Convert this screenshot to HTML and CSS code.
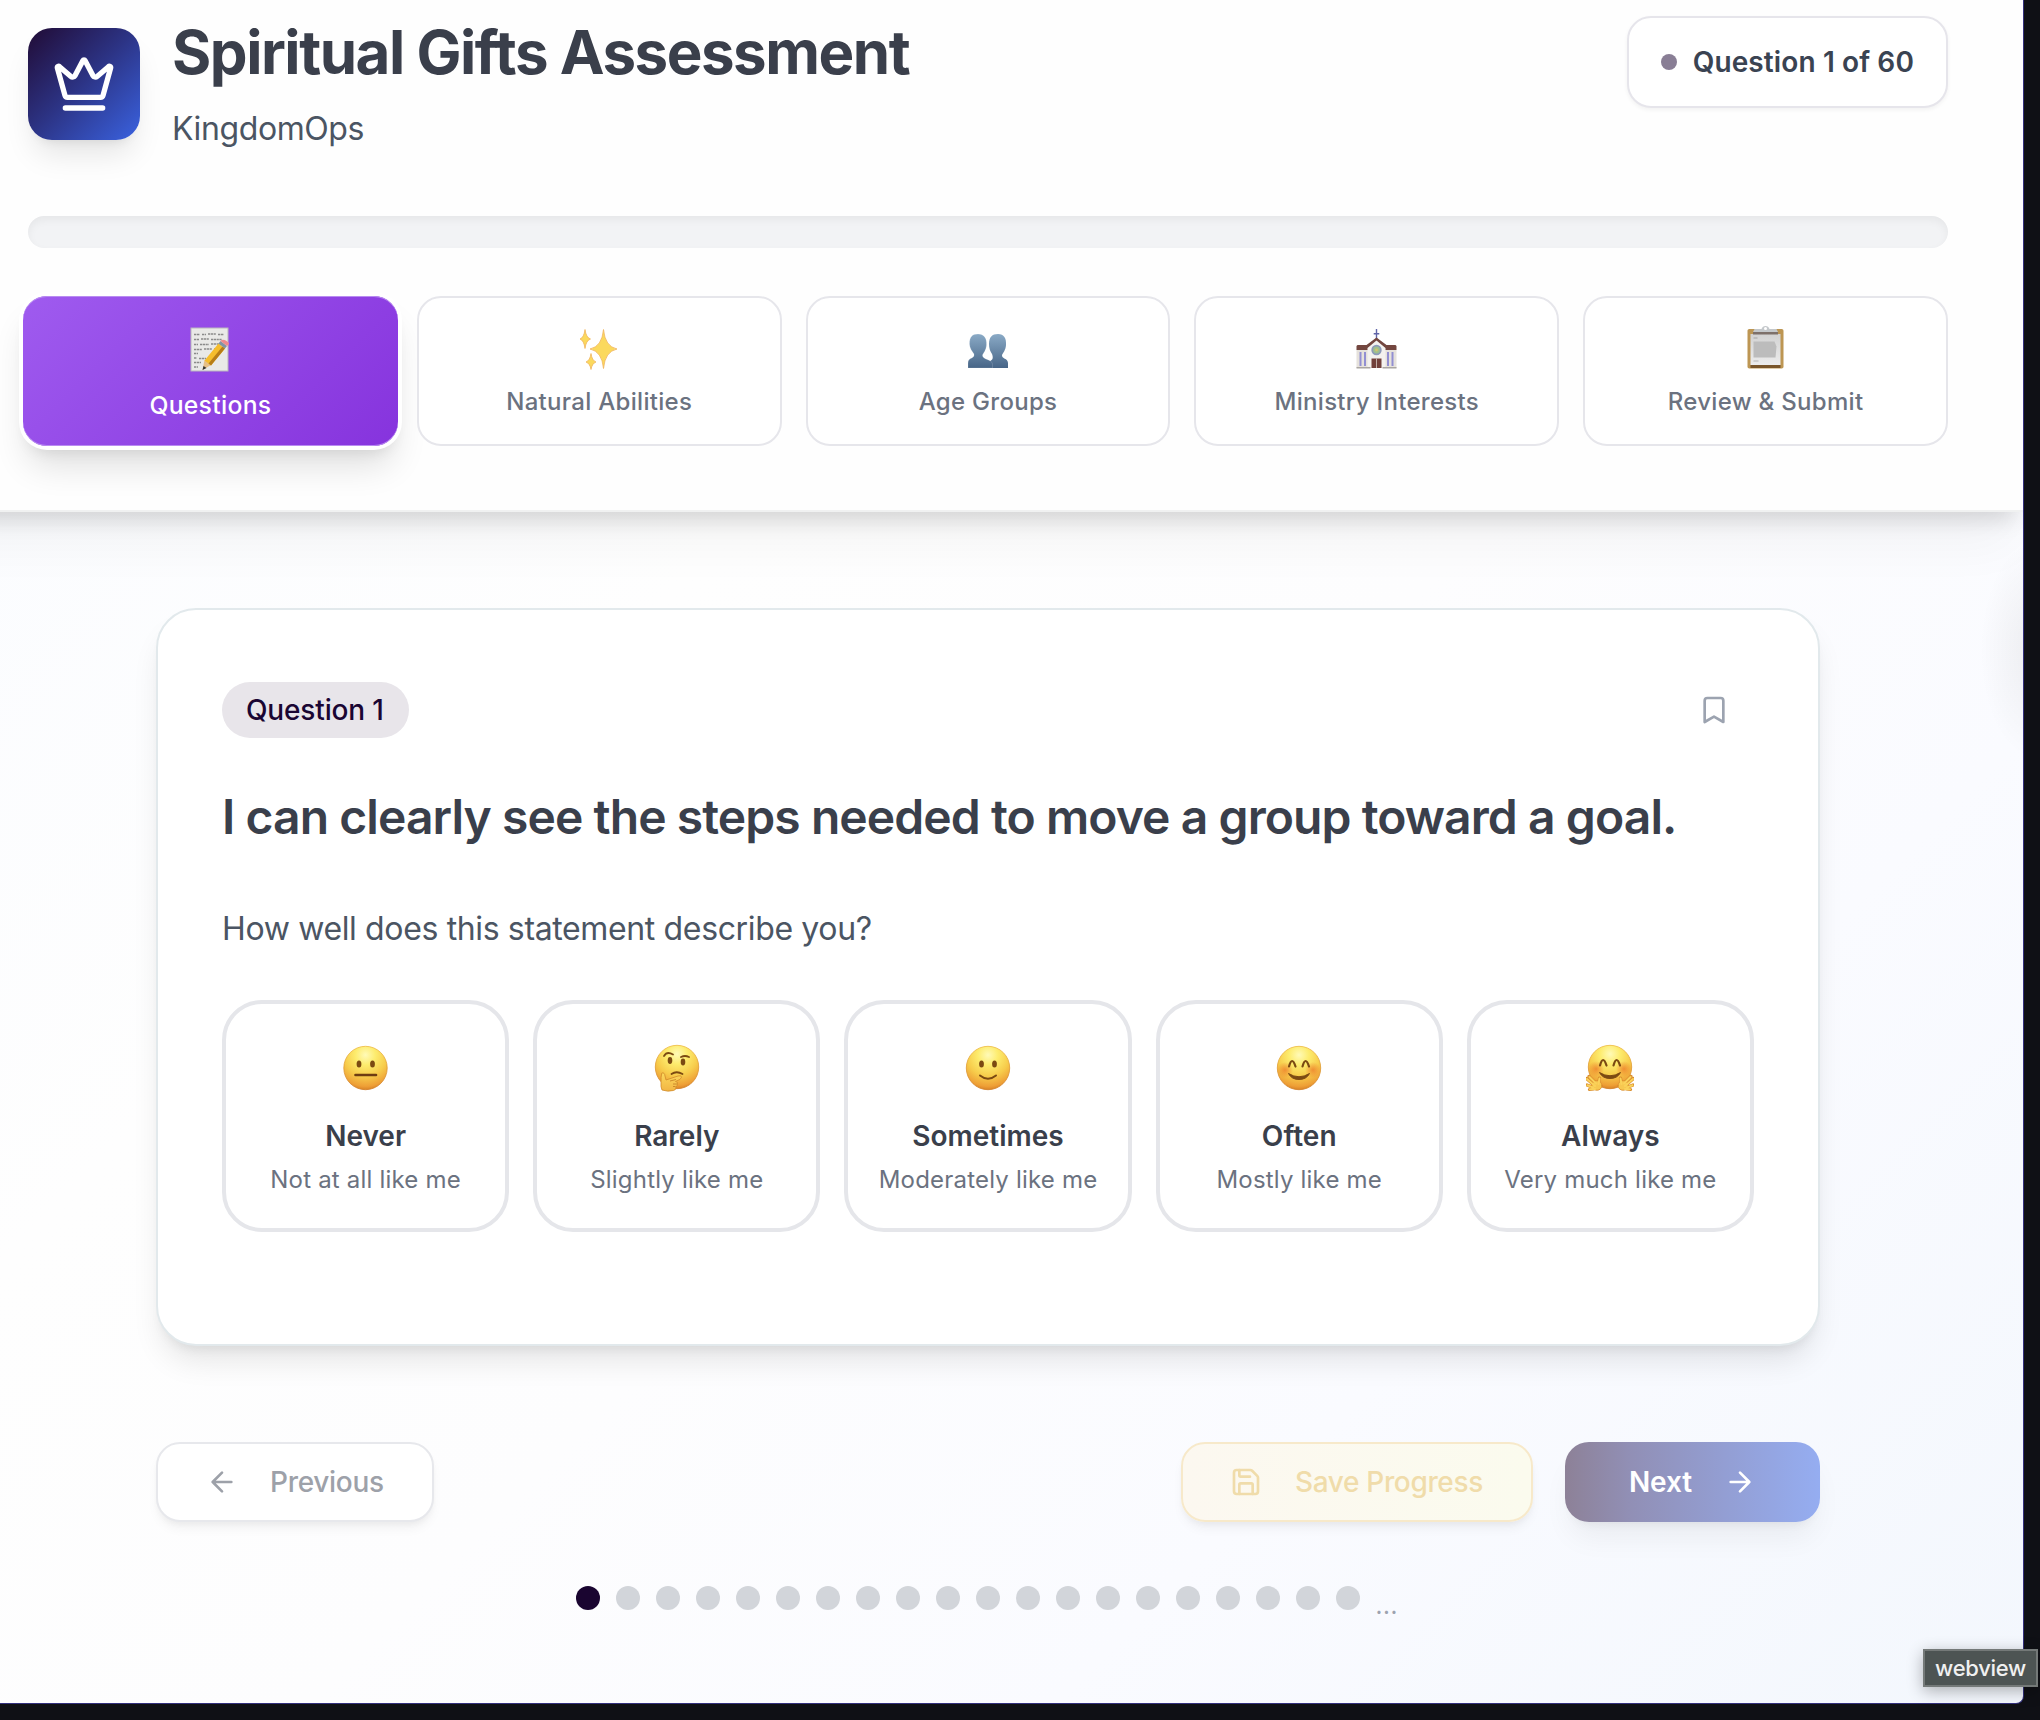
FILE: index.html
```html
<!DOCTYPE html>
<html lang="en">
<head>
<meta charset="utf-8">
<title>Spiritual Gifts Assessment</title>
<link rel="stylesheet" href="styles.css">
</head>
<body>
<svg class="defs" width="0" height="0" aria-hidden="true">
  <defs>
    <radialGradient id="face" cx=".5" cy=".2" r=".82"><stop offset="0" stop-color="#fffab8"/><stop offset=".28" stop-color="#fdec6e"/><stop offset=".6" stop-color="#f7cc4b"/><stop offset=".88" stop-color="#ee9f36"/><stop offset="1" stop-color="#d57c22"/></radialGradient>
    <radialGradient id="blush"><stop offset="0" stop-color="#ee7f2c" stop-opacity=".8"/><stop offset="1" stop-color="#ee7f2c" stop-opacity="0"/></radialGradient>
    <linearGradient id="rim" x1="0" y1="0" x2="0" y2="1"><stop offset="0" stop-color="#eeb93f"/><stop offset="1" stop-color="#cf7b22"/></linearGradient>
    <linearGradient id="hand" x1="0" y1="0" x2="0" y2="1"><stop offset="0" stop-color="#fbd95c"/><stop offset="1" stop-color="#f2b544"/></linearGradient>
    <linearGradient id="people" x1="0" y1="0" x2="0" y2="1"><stop offset="0" stop-color="#8aaac6"/><stop offset="1" stop-color="#476587"/></linearGradient>
    <linearGradient id="paper" x1="0" y1="0" x2="0" y2="1"><stop offset="0" stop-color="#d2d2d2"/><stop offset="1" stop-color="#ececec"/></linearGradient>
  </defs>
</svg>
<div class="window">
  <header class="header">
    <div class="top">
      <div class="brand">
        <div class="logo">
          <svg width="64" height="64" viewBox="0 0 24 24" class="line"><path d="M11.562 3.266a.5.5 0 0 1 .876 0L15.39 8.87a1 1 0 0 0 1.516.294L21.183 5.5a.5.5 0 0 1 .798.519l-2.834 10.246a1 1 0 0 1-.956.734H5.81a1 1 0 0 1-.957-.734L2.02 6.02a.5.5 0 0 1 .798-.519l4.276 3.664a1 1 0 0 0 1.516-.294z"/><path d="M5 21h14"/></svg>
        </div>
        <div>
          <h1 class="title">Spiritual Gifts Assessment</h1>
          <p class="subtitle">KingdomOps</p>
        </div>
      </div>
      <div class="counter"><span class="counter-dot"></span><span class="counter-text">Question 1 of 60</span></div>
    </div>
    <div class="progress"></div>
    <nav class="tabs">
      <button class="tab active">
        <svg width="48" height="48" viewBox="0 0 48 48"><rect x="5" y="3" width="37" height="43" fill="#e9e9e7" stroke="#b9b5bd" stroke-width="1"/><path d="M8 9.500h6M16 9.500h4M22 9h8M32 9.500h6M8 14.500h5M15 14h8M25 14.500h11M8 19.500h4M14 19.500h9M25 19h11M8 24.500h8M18 24h8M28 24h6M8 28.500h4M8 33h3M13 33.500h7M8 37.500h7M8 42h4" fill="none" stroke="#8a8a8a" stroke-width="1.500" stroke-dasharray="2.200 .6"/><path d="m16.500 45 2-10 6.500 5z" fill="#e6bf87"/><path d="m16.500 45 1-4 3 2z" fill="#333"/><path d="m18.500 35.500 14-17 6.500 5-14 17z" fill="#f5bd2d"/><path d="m22.500 38.500 14-17 2.500 2-14 17z" fill="#b77d18"/><path d="m32.500 18.500 2-2.500 6.500 5-2 2.500z" fill="#8194a5"/><path d="m34.500 16 1-1q2-1 5 1t2.500 3l-2 2z" fill="#ed8b8d"/></svg>
        <span class="tab-label">Questions</span>
      </button>
      <button class="tab">
        <svg width="48" height="48" viewBox="0 0 48 48" fill="#fbd95d" stroke="#f0b45c" stroke-width=".8"><path d="M28.500 5.500Q30 22.500 42 25 30 27.500 28.500 44.500 27 27.500 15 25 27 22.500 28.500 5.500z"/><path d="M10 5.500q1 8 5.500 9.500Q11 16.500 10 24.500 9 16.500 5 15 9 13.500 10 5.500z"/><path d="M16 29.500q1 7 5 8.500Q17 39.500 16 45.500 15 39.500 11 38 15 36.500 16 29.500z"/></svg>
        <span class="tab-label">Natural Abilities</span>
      </button>
      <button class="tab">
        <svg width="48" height="48" viewBox="0 0 48 48" fill="url(#people)"><path d="M34 10c6 0 8.500 4 8 11-.3 5-3 8-4 10-.5 4 6 3 6 8v5H24v-6c6-2 5-5 4-8-2-3-3-6-3-10 0-7 3-10 9-10z"/><path d="M14 10c6 0 9 4 8.500 11-.3 5-3 8-4 10-.5 5 9.500 4 10 9v4H4v-5c0-6 7-4 6-9-2-3-4.500-6-4.500-10 0-7 2.500-10 8.500-10z" stroke="#fff" stroke-opacity=".25" stroke-width=".6"/></svg>
        <span class="tab-label">Age Groups</span>
      </button>
      <button class="tab">
        <svg width="48" height="48" viewBox="0 0 48 48"><path d="M22.800 5h1.400v4h2.100v1.400h-2.100V16h-1.400v-5.600h-2.100V9h2.100z" fill="#5f64a8"/><path d="M3.500 26h40v18h-40z" fill="#e6e2dc"/><path d="m14.500 22 9-7 9 7v22h-18z" fill="#f4f2ef"/><path d="M3.500 26v-4l1-1h9l10-7.500 10 7.500h9l1 1v4h-11v-2l-9-7.500-9 7.500v2z" fill="#73463f"/><circle cx="23.500" cy="26" r="5.200" fill="#8c9ab9"/><circle cx="23.500" cy="26" r="3.400" fill="#9ec08e"/><circle cx="23.500" cy="26" r="1.400" fill="#d5c26e"/><path d="M18.500 34.500h10V44h-10z" fill="#71403a"/><path d="M23.100 34.500h.8V44h-.8z" fill="#d6c9c2"/><path d="M6.500 28h2v14h-2zM11 28h2v14h-2zM34 28h2v14h-2zM38.500 28h2v14h-2z" fill="#928fd2"/><path d="M3.500 43h14v1.500h-14zM29.500 43h14v1.500h-14z" fill="#aaa6a2"/></svg>
        <span class="tab-label">Ministry Interests</span>
      </button>
      <button class="tab">
        <svg width="48" height="48" viewBox="0 0 48 48"><rect x="5.500" y="5" width="36" height="39.500" rx="1.800" fill="#bd9653"/><path d="M8.500 41h30v3h-30z" fill="#79552a"/><path d="M8.500 10h30v31h-30z" fill="url(#paper)"/><path d="m11 8 1.500-3h7q1-3 4-3t4 3h7L36 8z" fill="#c4c8cb"/><circle cx="23.500" cy="4.500" r="1.500" fill="#fff"/><path d="M11 8h25v2.500H11z" fill="#7d706a"/><path d="M11.500 14h4" stroke="#a5a5a5"/><path d="M11.500 17.500h21l2 5-1 11h-22z" fill="#bcbcbc"/><path d="M11.500 37h5" stroke="#b5b5b5"/></svg>
        <span class="tab-label">Review &amp; Submit</span>
      </button>
    </nav>
  </header>

  <main class="main">
    <section class="card">
      <div class="card-top">
        <span class="pill">Question 1</span>
        <button class="bookmark"><svg width="32" height="32" viewBox="0 0 24 24" class="line"><path d="m19 21-7-4-7 4V5a2 2 0 0 1 2-2h10a2 2 0 0 1 2 2v16z"/></svg></button>
      </div>
      <h2 class="question">I can clearly see the steps needed to move a group toward a goal.</h2>
      <p class="prompt">How well does this statement describe you?</p>
      <div class="options">
        <button class="option">
          <svg width="48" height="48" viewBox="0 0 48 48"><circle cx="23.500" cy="24" r="21.700" fill="url(#face)" stroke="url(#rim)" stroke-width=".8"/><ellipse cx="17" cy="20" rx="2.400" ry="3.600" fill="#7b4a12"/><ellipse cx="30.500" cy="20" rx="2.400" ry="3.600" fill="#7b4a12"/><path d="M13.500 31h20.500" stroke="#6e3c12" stroke-width="2.600" stroke-linecap="round"/></svg>
          <span class="option-name">Never</span><span class="option-text">Not at all like me</span>
        </button>
        <button class="option">
          <svg width="48" height="48" viewBox="0 0 48 48"><circle cx="24" cy="23" r="21.700" fill="url(#face)" stroke="url(#rim)" stroke-width=".8"/><ellipse cx="17" cy="16.500" rx="2.300" ry="3.400" fill="#7b4a12"/><ellipse cx="30" cy="18" rx="2.300" ry="3.400" fill="#7b4a12"/><path d="M11 12q3-5 9-1.500M28 13q4-2 8 0M18.500 30q5-3.500 11 0" fill="none" stroke="#7b4a12" stroke-width="1.800" stroke-linecap="round"/><path d="M9 46q-1.500-3-1-8-.2-5 .8-9 2.700-1 3.200 3l1 4 12-4q3.500-1 3.500 1.200t-6 4.300q3 .5 2 2.700.2 2-1.500 2.300.5 3.500-2.500 4-6 1.500-11.500-.5z" fill="url(#hand)" stroke="#d08a2a" stroke-width=".8"/><path d="m17 37 6-1.500M20 40h4M20 42.500h2.500" stroke="#c47c23" stroke-width=".8"/></svg>
          <span class="option-name">Rarely</span><span class="option-text">Slightly like me</span>
        </button>
        <button class="option">
          <svg width="48" height="48" viewBox="0 0 48 48"><circle cx="24" cy="24" r="21.700" fill="url(#face)" stroke="url(#rim)" stroke-width=".8"/><ellipse cx="17.500" cy="20" rx="2.400" ry="3.600" fill="#7b4a12"/><ellipse cx="30.500" cy="20" rx="2.400" ry="3.600" fill="#7b4a12"/><path d="M16 31.500q8 6.500 16 0" fill="none" stroke="#7b4a12" stroke-width="2" stroke-linecap="round"/></svg>
          <span class="option-name">Sometimes</span><span class="option-text">Moderately like me</span>
        </button>
        <button class="option">
          <svg width="48" height="48" viewBox="0 0 48 48"><circle cx="24" cy="24" r="21.700" fill="url(#face)" stroke="url(#rim)" stroke-width=".8"/><circle cx="10" cy="26" r="8" fill="url(#blush)"/><circle cx="38" cy="26" r="8" fill="url(#blush)"/><path d="M14 22.500q3-11 6.500 0M27.500 22.500q3-11 6.500 0" fill="none" stroke="#7b4a12" stroke-width="2.200" stroke-linecap="round"/><path d="M13.500 29.500q10.500 6.500 21 0-3 6-10.500 6t-10.500-6z" fill="#7b4a12" stroke="#7b4a12" stroke-linejoin="round"/></svg>
          <span class="option-name">Often</span><span class="option-text">Mostly like me</span>
        </button>
        <button class="option">
          <svg width="48" height="48" viewBox="0 0 48 48"><circle cx="24" cy="23" r="21.700" fill="url(#face)" stroke="url(#rim)" stroke-width=".8"/><circle cx="10" cy="25" r="8" fill="url(#blush)"/><circle cx="38" cy="25" r="8" fill="url(#blush)"/><path d="M14 21.500q3-11 6.500 0M27.500 21.500q3-11 6.500 0" fill="none" stroke="#7b4a12" stroke-width="2.200" stroke-linecap="round"/><path d="M13.500 28.500q10.500 6.500 21 0-3 6-10.500 6t-10.500-6z" fill="#7b4a12" stroke="#7b4a12" stroke-linejoin="round"/><g id="palm" stroke-linecap="round" fill="none"><path d="m8 41-7.500-6.500M9 38.500l-6-6M6 43l-5-2M7.500 45l-4 .5M12.500 39l1-5" stroke="#d98c2c" stroke-width="3.200"/><ellipse cx="11" cy="41.500" rx="5" ry="4.800" fill="#f7c850" stroke="#d98c2c" stroke-width=".8"/><path d="m9 42-8-7M10 39.500l-6.500-6.500M7 43.500l-5.500-2.200M9 45l-5 .3M12.500 40l1-5.500" stroke="#fad25a" stroke-width="2"/></g><use href="#palm" transform="matrix(-1 0 0 1 48 0)"/></svg>
          <span class="option-name">Always</span><span class="option-text">Very much like me</span>
        </button>
      </div>
    </section>

    <div class="actions">
      <button class="btn prev"><svg width="32" height="32" viewBox="0 0 24 24" class="line"><path d="m12 19-7-7 7-7M19 12H5"/></svg><span>Previous</span></button>
      <div class="actions-right">
        <button class="btn save"><svg width="32" height="32" viewBox="0 0 24 24" class="line"><path d="M15.200 3a2 2 0 0 1 1.400.6l3.800 3.800a2 2 0 0 1 .6 1.400V19a2 2 0 0 1-2 2H5a2 2 0 0 1-2-2V5a2 2 0 0 1 2-2z"/><path d="M17 21v-7a1 1 0 0 0-1-1H8a1 1 0 0 0-1 1v7M7 3v4a1 1 0 0 0 1 1h7"/></svg><span>Save Progress</span></button>
        <button class="btn next"><span>Next</span><svg width="32" height="32" viewBox="0 0 24 24" class="line"><path d="M5 12h14M12 5l7 7-7 7"/></svg></button>
      </div>
    </div>

    <div class="dots">
      <i class="dot current"></i><i class="dot"></i><i class="dot"></i><i class="dot"></i><i class="dot"></i><i class="dot"></i><i class="dot"></i><i class="dot"></i><i class="dot"></i><i class="dot"></i><i class="dot"></i><i class="dot"></i><i class="dot"></i><i class="dot"></i><i class="dot"></i><i class="dot"></i><i class="dot"></i><i class="dot"></i><i class="dot"></i><i class="dot"></i><span class="more">...</span>
    </div>
  </main>
</div>
<div class="tooltip">webview</div>
</body>
</html>
```

FILE: styles.css
```css
* { box-sizing: border-box; }
body {
  margin: 0;
  width: 2040px;
  height: 1720px;
  overflow: hidden;
  background: #0f1015;
  font-family: Inter, "Liberation Sans", sans-serif;
  color: #3a3f4b;
}
h1, h2, p { margin: 0; }
button { font: inherit; color: inherit; background: none; border: 0; padding: 0; }
svg { display: block; flex: none; }
.defs { position: absolute; }
.line { fill: none; stroke: currentColor; stroke-width: 2; stroke-linecap: round; stroke-linejoin: round; }

.window {
  width: 2024px;
  height: 1704px;
  overflow: hidden;
  border-right: 1px solid #33307c;
  border-bottom: 1px solid #33307c;
  border-bottom-right-radius: 8px;
  background:
    radial-gradient(ellipse 56px 110px at 2036px 650px, rgba(0, 0, 0, .06), rgba(0, 0, 0, 0)),
    linear-gradient(135deg, #f9fbff 0%, #fefefe 34%, #fdfdfe 54%, #fafbff 74%, #f3f7fd 100%);
}

/* Header, bleeding past the left edge of the window */
.header {
  position: relative;
  height: 512px;
  margin-left: -60px;
  padding: 16px 75px 0 88px;
  background: #fefefe;
  border-bottom: 2px solid #f0f1f1;
  box-shadow: 0 40px 50px -10px rgba(0, 0, 0, .045), 0 16px 20px -8px rgba(0, 0, 0, .13);
}
.top { display: flex; justify-content: space-between; align-items: flex-start; }
.brand { display: flex; gap: 32px; }
.logo {
  display: grid;
  place-items: center;
  width: 112px;
  height: 112px;
  margin-top: 12px;
  border-radius: 24px;
  color: #fff;
  background: linear-gradient(135deg, #210b35 0%, #2c3384 48%, #3a62e0 100%);
  box-shadow: 0 20px 30px -6px rgba(0, 0, 0, .1), 0 8px 12px -8px rgba(0, 0, 0, .1);
}
.title { font-size: 60px; line-height: 72px; font-weight: 700; letter-spacing: -1.47px; }
.subtitle { margin-top: 17px; font-size: 32px; line-height: 47px; letter-spacing: -.4px; color: #4b5563; }
.counter {
  display: flex;
  align-items: center;
  gap: 16px;
  height: 92px;
  padding: 0 32px;
  border: 2px solid #e6e5eb;
  border-radius: 24px;
  background: #fff;
  box-shadow: 0 2px 4px rgba(0, 0, 0, .05);
}
.counter-dot { width: 16px; height: 16px; border-radius: 50%; background: #897e95; }
.counter-text { font-size: 28px; font-weight: 600; letter-spacing: .12px; color: #3a4352; }
.progress { height: 32px; margin-top: 64px; border-radius: 16px; background: #f2f3f5; box-shadow: inset 0 4px 8px rgba(0, 0, 0, .05); }
.tabs { display: grid; grid-template-columns: repeat(5, 1fr); gap: 24px; margin-top: 48px; }
.tab {
  display: flex;
  flex-direction: column;
  align-items: center;
  gap: 14px;
  height: 150px;
  padding-top: 26px;
  border: 2px solid #e6e6eb;
  border-radius: 24px;
  background: #fff;
  color: #6b7280;
}
.tab-label { font-size: 24px; line-height: 32px; font-weight: 450; letter-spacing: .3px; white-space: nowrap; }
.active {
  margin: 0 -5px;
  gap: 16px;
  border: 0;
  padding-top: 29px;
  color: #fff;
  background: linear-gradient(135deg, #9f5bef, #8633dd);
  box-shadow: inset 0 1px #b98cf1, inset 0 -1px #b98cf1, 0 0 0 4px #fff, 0 24px 34px -4px rgba(0, 0, 0, .12), 0 10px 16px -6px rgba(0, 0, 0, .11);
}
.active .tab-label { font-size: 24.7px; }

/* Question card */
.main { padding: 96px 203px 0 156px; }
.card {
  height: 738px;
  padding: 64px;
  border: 2px solid #e2e9ec;
  border-radius: 40px;
  background: #fff;
  box-shadow: 0 20px 30px -6px rgba(0, 0, 0, .1), 0 8px 12px -6px rgba(0, 0, 0, .08);
}
.card-top { display: flex; justify-content: space-between; align-items: center; height: 72px; }
.pill { width: 187px; padding-left: 24px; border-radius: 28px; background: #e8e5ea; color: #1a0533; font-size: 28px; line-height: 56px; font-weight: 500; letter-spacing: -.15px; white-space: nowrap; }
.bookmark { display: grid; place-items: center; width: 80px; height: 72px; color: #9ca3b0; }
.question { margin-top: 40px; font-size: 48px; line-height: 61px; font-weight: 600; letter-spacing: -.92px; white-space: nowrap; }
.prompt { margin-top: 58px; font-size: 32px; line-height: 48px; letter-spacing: -.36px; color: #4b5563; }
.options { display: grid; grid-template-columns: repeat(5, 1fr); gap: 24px; margin-top: 47px; }
.option {
  display: flex;
  flex-direction: column;
  align-items: center;
  height: 232px;
  padding-top: 40px;
  border: 4px solid #e5e6ea;
  border-radius: 40px;
  background: #fff;
}
.option-name { margin-top: 24px; font-size: 28px; line-height: 40px; font-weight: 600; }
.option-text { margin-top: 8px; font-size: 24px; line-height: 32px; letter-spacing: .2px; color: #6b7280; white-space: nowrap; }

/* Actions */
.actions, .actions-right { display: flex; justify-content: space-between; }
.actions { margin-top: 96px; }
.actions-right { gap: 32px; }
.btn {
  display: flex;
  align-items: center;
  height: 80px;
  border: 2px solid;
  border-radius: 24px;
  font-size: 28px;
  font-weight: 500;
  white-space: nowrap;
  box-shadow: 0 8px 12px -2px rgba(0, 0, 0, .05), 0 4px 6px -2px rgba(0, 0, 0, .04);
}
.prev { width: 278px; padding-left: 48px; gap: 32px; letter-spacing: -.3px; border-color: #e7e8ec; background: #fff; color: #9da1a9; }
.save { width: 352px; padding-left: 47px; gap: 33px; letter-spacing: -.35px; border-color: #f7e9ca; background: linear-gradient(90deg, #fcf8f0, #fbfbee); color: #f0dcaa; }
.next {
  width: 255px;
  padding-left: 64px;
  gap: 32px;
  border: 0;
  background: linear-gradient(90deg, #8d8197, #918fb5 25%, #95adf1);
  color: #fff;
  font-weight: 600;
  letter-spacing: -.15px;
  box-shadow: 0 20px 30px -6px rgba(0, 0, 0, .06), 0 8px 12px -8px rgba(0, 0, 0, .08);
}
.dots { display: flex; justify-content: center; gap: 16px; height: 40px; margin-top: 64px; }
.dot { width: 24px; height: 24px; border-radius: 50%; background: #d2d5da; }
.current { background: #1a0530; }
.more { width: 25px; font-size: 24px; line-height: 40px; letter-spacing: .6px; color: #9ca3af; }

/* Label floating over the window corner */
.tooltip {
  position: absolute;
  left: 1923px;
  top: 1649px;
  width: 115px;
  height: 38px;
  border: 2px solid #747978;
  background: #4d5453;
  color: #f0f0f0;
  font-size: 22px;
  line-height: 34px;
  font-weight: 500;
  letter-spacing: -.3px;
  text-align: center;
  box-shadow: 0 4px 16px rgba(0, 0, 0, .3);
}
```
